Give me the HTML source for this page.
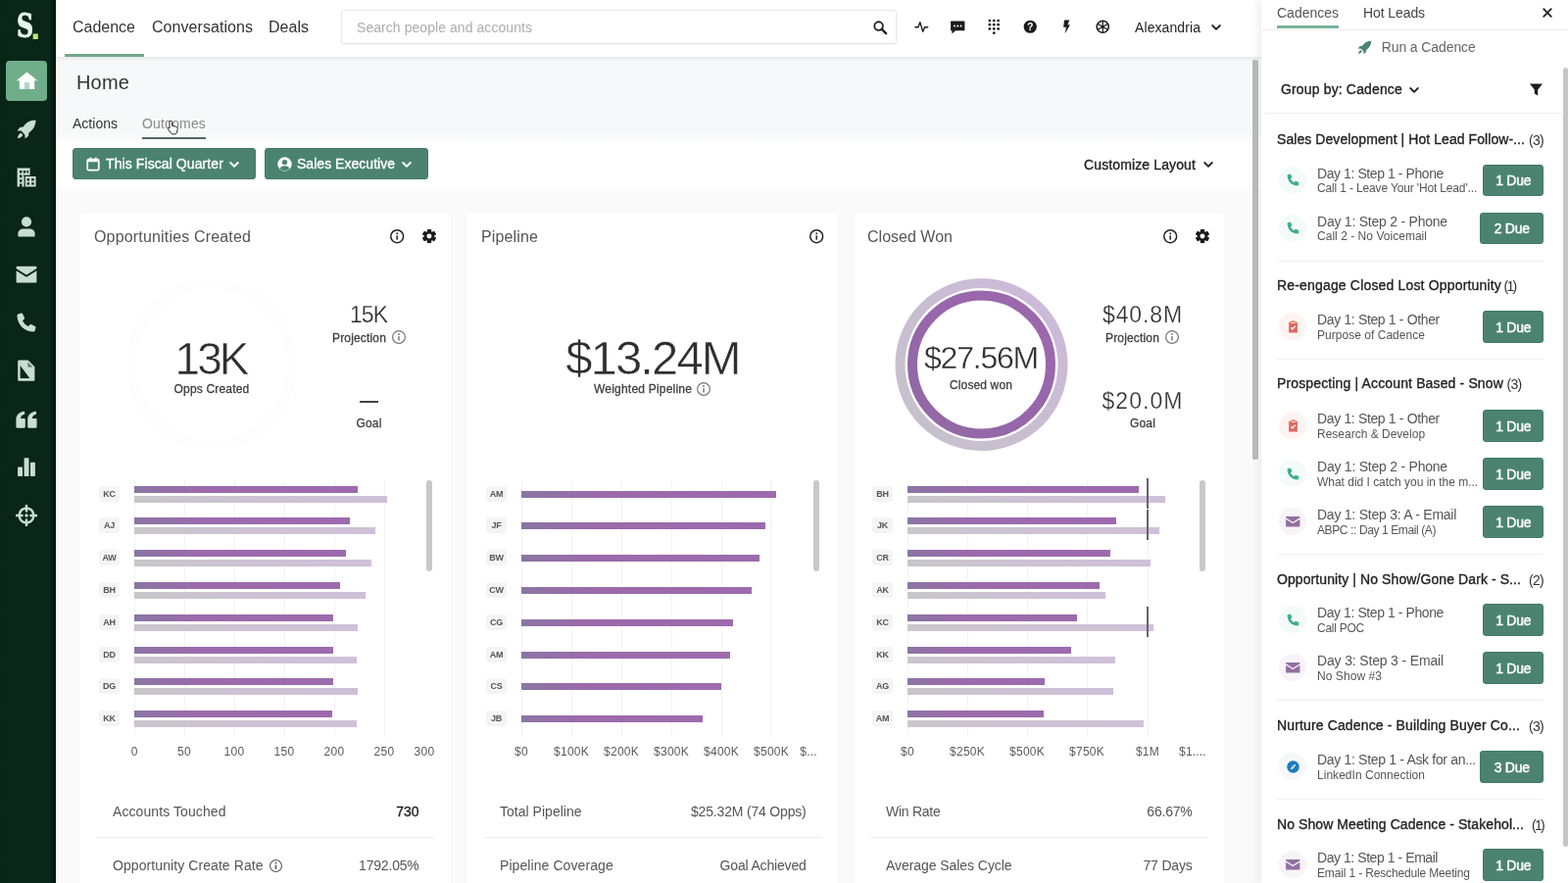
<!DOCTYPE html>
<html lang="en">
<head>
<meta charset="utf-8">
<title>Home - Outcomes</title>
<style>
html,body{margin:0;padding:0;}
body{width:1600px;height:901px;overflow:hidden;position:relative;background:#fafafb;font-family:"Liberation Sans", sans-serif;}
#app{position:absolute;left:0;top:0;width:1600px;height:901px;overflow:hidden;will-change:transform;}
.b{position:absolute;box-sizing:border-box;}
.t{position:absolute;white-space:nowrap;display:block;}
</style>
</head>
<body>
<div id="app">
<div class="b" style="left:57px;top:58px;width:1230px;height:90px;background:linear-gradient(180deg,#f7f8fa 0%,#f7f8fa 86%,#ffffff 100%);"></div>
<div class="b" style="left:57px;top:148px;width:1230px;height:41px;background:#fff;"></div>
<div class="b" style="left:57px;top:189px;width:1230px;height:8px;background:linear-gradient(180deg,#ffffff 0%,#fafafb 100%);"></div>
<div class="b" style="left:57px;top:0px;width:1230px;height:58px;background:#fff;box-shadow:0 1px 4px rgba(0,0,0,.10);"></div>
<div class="b" style="left:0px;top:0px;width:57px;height:901px;background:linear-gradient(90deg,#082518 0%,#0a271a 88%,#03130b 100%);"></div>
<span class="t" style="left:17.2px;top:3.9px;font-size:33px;line-height:46px;color:#e6f6ed;font-weight:700;font-family:'DejaVu Serif','Liberation Serif',serif;-webkit-text-stroke:.9px #e6f6ed;transform:scaleX(.72);transform-origin:0 50%;">S</span>
<span class="t" style="left:31.2px;top:8px;font-size:36px;line-height:40px;color:#c3e37a;font-weight:700;">.</span>
<div class="b" style="left:6px;top:62px;width:42px;height:41px;background:#70ae8b;border-radius:4px;"></div>
<svg class="b" style="left:15.5px;top:71.0px;" width="23" height="23" viewBox="0 0 24 24"><g fill="#fff"><path d="M12 2.6 L0.8 11.8 H4 V20.8 H9.6 V14.2 H14.4 V20.8 H20 V11.8 H23.2 Z"/><rect x="9.6" y="14.2" width="4.8" height="6.6" fill="#b4d8c4"/></g></svg>
<svg class="b" style="left:15.0px;top:120.0px;" width="24" height="24" viewBox="0 0 24 24"><g fill="#c9ddd3"><path d="M21.5 2.5 C16 2.6 11.5 5 8.6 9.6 L5.2 10 L2.6 13.4 L6.6 13.6 L10.4 17.4 L10.6 21.4 L14 18.8 L14.4 15.4 C19 12.5 21.4 8 21.5 2.5 Z"/><path d="M6.6 15.8 C5 16.2 3.4 17.6 2.8 21.2 C6.4 20.6 7.8 19 8.2 17.4 Z"/></g></svg>
<svg class="b" style="left:15.0px;top:169.0px;" width="24" height="24" viewBox="0 0 24 24"><g fill="#c9ddd3"><path fill-rule="evenodd" d="M2.6 2.6 H15.6 V21.4 H2.6 Z M5 5 V7.6 H7.4 V5 Z M8.9 5 V7.6 H11.3 V5 Z M12.6 5 V7.6 H14 V5 Z M5 9.6 V12.2 H7.4 V9.6 Z M5 14.2 V16.8 H7.4 V14.2 Z M5 18.6 V21.4 H7.4 V18.6 Z M8.9 9.6 H10 V10.6 H8.9 Z"/><path d="M9.6 9.8 H22 V22 H9.6 Z" fill="#0b2519"/><path fill-rule="evenodd" d="M10.8 11 H21.6 V21.4 H10.8 Z M12.6 13 V15.4 H15 V13 Z M17.2 13 V15.4 H19.6 V13 Z M12.6 17.2 V19.6 H15 V17.2 Z M17.2 17.2 V19.6 H19.6 V17.2 Z"/></g></svg>
<svg class="b" style="left:15.0px;top:218.5px;" width="24" height="24" viewBox="0 0 24 24"><g fill="#c9ddd3"><circle cx="12" cy="7.4" r="5.1"/><path d="M3.4 21.6 V19.4 C3.4 16.2 6 14.4 9 14.4 H15 C18 14.4 20.6 16.2 20.6 19.4 V21.6 C20.6 22.2 20.2 22.6 19.6 22.6 H4.4 C3.8 22.6 3.4 22.2 3.4 21.6 Z"/></g></svg>
<svg class="b" style="left:15.0px;top:267.5px;" width="24" height="24" viewBox="0 0 24 24"><g fill="#c9ddd3"><path d="M2.6 3.8 H21.4 C22 3.8 22.4 4.2 22.4 4.8 V6 L12 12.6 L1.6 6 V4.8 C1.6 4.2 2 3.8 2.6 3.8 Z"/><path d="M1.6 8.2 L12 14.8 L22.4 8.2 V19.6 C22.4 20.2 22 20.6 21.4 20.6 H2.6 C2 20.6 1.6 20.2 1.6 19.6 Z"/></g></svg>
<svg class="b" style="left:15.0px;top:317.0px;" width="24" height="24" viewBox="0 0 24 24"><g fill="#c9ddd3"><path d="M6.6 2.6 C7.2 2.4 7.8 2.6 8.1 3.2 L10 7.2 C10.2 7.7 10.1 8.3 9.7 8.7 L8 10.2 C9.3 12.8 11.3 14.8 13.9 16.1 L15.4 14.4 C15.8 14 16.4 13.9 16.9 14.1 L20.9 16 C21.5 16.3 21.7 16.9 21.5 17.5 L20.6 20.6 C20.4 21.2 19.9 21.6 19.3 21.6 C10 21.6 2.5 14.1 2.5 4.8 C2.5 4.2 2.9 3.7 3.5 3.5 Z"/></g></svg>
<svg class="b" style="left:15.0px;top:366.0px;" width="24" height="24" viewBox="0 0 24 24"><g fill="#c9ddd3"><path d="M4.6 1.4 H13.6 L20.4 8.2 V21.4 C20.4 22.2 19.8 22.8 19 22.8 H4.6 C3.8 22.8 3.2 22.2 3.2 21.4 V2.8 C3.2 2 3.8 1.4 4.6 1.4 Z"/><path d="M5.6 7 L15.4 20 H5.6 Z" fill="#0b2519"/><path d="M13.4 3.4 L18.4 8.6 H13.4 Z" fill="#0b2519" opacity=".55"/></g></svg>
<svg class="b" style="left:15.0px;top:415.5px;" width="24" height="24" viewBox="0 0 24 24"><g fill="#c9ddd3"><path d="M1.4 19.6 V12.4 C1.4 7.6 4.4 4.4 9.6 3.8 C10 3.8 10.2 4 10.2 4.4 V6.4 C10.2 6.8 10 7 9.6 7.1 C7.4 7.6 6.3 8.9 6.1 11 H9.6 C10.3 11 10.8 11.5 10.8 12.2 V19.6 C10.8 20.3 10.3 20.8 9.6 20.8 H2.6 C1.9 20.8 1.4 20.3 1.4 19.6 Z M13.2 19.6 V12.4 C13.2 7.6 16.2 4.4 21.4 3.8 C21.8 3.8 22 4 22 4.4 V6.4 C22 6.8 21.8 7 21.4 7.1 C19.2 7.6 18.1 8.9 17.9 11 H21.4 C22.1 11 22.6 11.5 22.6 12.2 V19.6 C22.6 20.3 22.1 20.8 21.4 20.8 H14.4 C13.7 20.8 13.2 20.3 13.2 19.6 Z"/></g></svg>
<svg class="b" style="left:15.0px;top:464.0px;" width="24" height="24" viewBox="0 0 24 24"><g fill="#c9ddd3"><rect x="3.1" y="12.6" width="4.9" height="9.4" rx=".7"/><rect x="9.6" y="3.2" width="4.9" height="18.8" rx=".7"/><rect x="16" y="7.8" width="4.9" height="14.2" rx=".7"/></g></svg>
<svg class="b" style="left:15.0px;top:514.0px;" width="24" height="24" viewBox="0 0 24 24"><g fill="#c9ddd3"><path fill-rule="evenodd" d="M10.8 1 H13.2 V3.6 A8.6 8.6 0 0 1 20.4 10.8 H23 V13.2 H20.4 A8.6 8.6 0 0 1 13.2 20.4 V23 H10.8 V20.4 A8.6 8.6 0 0 1 3.6 13.2 H1 V10.8 H3.6 A8.6 8.6 0 0 1 10.8 3.6 Z M10.8 6 A6.2 6.2 0 0 0 6 10.8 H8.6 V13.2 H6 A6.2 6.2 0 0 0 10.8 18 V15.4 H13.2 V18 A6.2 6.2 0 0 0 18 13.2 H15.4 V10.8 H18 A6.2 6.2 0 0 0 13.2 6 V8.6 H10.8 Z"/><circle cx="12" cy="12" r="1.7"/></g></svg>
<span class="t" style="left:74.0px;top:16.5px;font-size:16px;line-height:21px;color:#333;letter-spacing:-0.01px;">Cadence</span>
<span class="t" style="left:155.0px;top:16.5px;font-size:16px;line-height:21px;color:#333;letter-spacing:0.06px;">Conversations</span>
<span class="t" style="left:274.0px;top:16.5px;font-size:16px;line-height:21px;color:#333;letter-spacing:0.02px;">Deals</span>
<div class="b" style="left:65.5px;top:54.6px;width:81px;height:3.4px;background:#74a88e;"></div>
<div class="b" style="left:348px;top:10px;width:567px;height:35px;background:#fff;border:1px solid #e7e7e9;border-radius:3px;box-shadow:0 1px 2px rgba(0,0,0,.05);"></div>
<span class="t" style="left:364.0px;top:19.0px;font-size:14px;line-height:18px;color:#adadad;letter-spacing:0.06px;">Search people and accounts</span>
<svg class="b" style="left:890px;top:20px;" width="16" height="16" viewBox="0 0 17 17"><circle cx="7" cy="7" r="4.6" fill="none" stroke="#222" stroke-width="1.9"/><path d="M10.4 10.4 L15 15" stroke="#222" stroke-width="2.6" stroke-linecap="round"/></svg>
<svg class="b" style="left:931.75px;top:19.25px;" width="16.5" height="16.5" viewBox="0 0 18 18"><path d="M2 9.6 H5.4 L7.4 4 L10.6 14.4 L12.6 9.6 H16" fill="none" stroke="#1c1c1c" stroke-width="1.5" stroke-linejoin="round" stroke-linecap="round"/></svg>
<svg class="b" style="left:968.75px;top:19.25px;" width="16.5" height="16.5" viewBox="0 0 18 18"><path d="M1.2 2.8 H16.8 V13.4 H6.6 L2.6 16.8 V13.4 H1.2 Z" fill="#1c1c1c"/><circle cx="5.4" cy="8.1" r="1.1" fill="#fff"/><circle cx="9" cy="8.1" r="1.1" fill="#fff"/><circle cx="12.6" cy="8.1" r="1.1" fill="#fff"/></svg>
<svg class="b" style="left:1005.75px;top:19.25px;" width="16.5" height="16.5" viewBox="0 0 18 18"><circle cx="4.2" cy="2.2" r="1.5" fill="#1c1c1c"/><circle cx="9" cy="2.2" r="1.5" fill="#1c1c1c"/><circle cx="13.8" cy="2.2" r="1.5" fill="#1c1c1c"/><circle cx="4.2" cy="6.8" r="1.5" fill="#1c1c1c"/><circle cx="9" cy="6.8" r="1.5" fill="#1c1c1c"/><circle cx="13.8" cy="6.8" r="1.5" fill="#1c1c1c"/><circle cx="4.2" cy="11.4" r="1.5" fill="#1c1c1c"/><circle cx="9" cy="11.4" r="1.5" fill="#1c1c1c"/><circle cx="13.8" cy="11.4" r="1.5" fill="#1c1c1c"/><circle cx="9" cy="16" r="1.5" fill="#1c1c1c"/></svg>
<svg class="b" style="left:1042.75px;top:19.25px;" width="16.5" height="16.5" viewBox="0 0 18 18"><circle cx="9" cy="9" r="7.2" fill="#1c1c1c"/><text x="9" y="13.1" font-size="11.5" font-weight="700" text-anchor="middle" fill="#fff" font-family="Liberation Sans, sans-serif">?</text></svg>
<svg class="b" style="left:1079.75px;top:19.25px;" width="16.5" height="16.5" viewBox="0 0 18 18"><path d="M6.6 1.6 H12.4 L10.2 6.8 H13 L7.4 16.6 L8.6 9.6 H5.6 Z" fill="#1c1c1c"/></svg>
<svg class="b" style="left:1116.75px;top:19.25px;" width="16.5" height="16.5" viewBox="0 0 18 18"><circle cx="9" cy="9" r="6.6" fill="none" stroke="#1c1c1c" stroke-width="1.7"/><path d="M9 2.4 V15.6 M3.3 5.7 L14.7 12.3 M3.3 12.3 L14.7 5.7" stroke="#1c1c1c" stroke-width="1.4"/><circle cx="9" cy="9" r="1.6" fill="#1c1c1c"/></svg>
<span class="t" style="left:1158.0px;top:19.0px;font-size:14px;line-height:18px;color:#222;letter-spacing:0.09px;">Alexandria</span>
<svg class="b" style="left:1235px;top:24px;" width="12" height="8" viewBox="0 0 12 8"><path d="M2.2 2 L6 5.8 L9.8 2" fill="none" stroke="#222" stroke-width="1.8" stroke-linecap="round" stroke-linejoin="round"/></svg>
<div class="b" style="left:1278px;top:61px;width:6px;height:408px;background:#bcbcbe;border-radius:2px;"></div>
<span class="t" style="left:78.0px;top:71.0px;font-size:20px;line-height:26px;color:#333;letter-spacing:0.16px;">Home</span>
<span class="t" style="left:74.0px;top:117.0px;font-size:14px;line-height:18px;color:#333;letter-spacing:0.01px;">Actions</span>
<span class="t" style="left:145.0px;top:117.0px;font-size:14px;line-height:18px;color:#8a8a8a;letter-spacing:0.15px;">Outcomes</span>
<div class="b" style="left:145px;top:140px;width:65px;height:2px;background:#4d6b5f;"></div>
<svg class="b" style="left:170px;top:122px;" width="14" height="16" viewBox="0 0 14 16"><path d="M4.2 1.2 C5 1.2 5.6 1.8 5.6 2.6 V6.4 L9.6 7.2 C10.8 7.5 11.4 8.3 11.2 9.5 L10.6 13 C10.4 14.2 9.6 14.8 8.4 14.8 H6.2 C5.4 14.8 4.8 14.4 4.4 13.8 L1.4 9.6 C1 9 1.6 8.2 2.4 8.6 L3 9 V2.6 C3 1.8 3.4 1.2 4.2 1.2 Z" fill="#fff" stroke="#222" stroke-width="1"/></svg>
<div class="b" style="left:74px;top:151px;width:187px;height:32px;background:#4b8370;border-radius:3px;border:1px solid #44796a;"></div>
<svg class="b" style="left:88px;top:160px" width="14" height="15" viewBox="0 0 14 15"><rect x="1.2" y="2.6" width="11.6" height="11" rx="1.4" fill="none" stroke="#fff" stroke-width="1.7"/><rect x="1.2" y="2.6" width="11.6" height="2.6" fill="#fff"/><rect x="3.4" y=".6" width="1.7" height="3" fill="#fff"/><rect x="8.9" y=".6" width="1.7" height="3" fill="#fff"/></svg>
<span class="t" style="left:108.0px;top:158.0px;font-size:14px;line-height:18px;color:#fff;-webkit-text-stroke:0.34px currentColor;letter-spacing:0.09px;">This Fiscal Quarter</span>
<svg class="b" style="left:233px;top:164px;" width="12" height="8" viewBox="0 0 12 8"><path d="M2.2 2 L6 5.8 L9.8 2" fill="none" stroke="#fff" stroke-width="2.0" stroke-linecap="round" stroke-linejoin="round"/></svg>
<div class="b" style="left:270px;top:151px;width:167px;height:32px;background:#4b8370;border-radius:3px;border:1px solid #44796a;"></div>
<svg class="b" style="left:283px;top:160px" width="15" height="15" viewBox="0 0 15 15"><circle cx="7.5" cy="7.5" r="7.2" fill="#fff"/><circle cx="7.5" cy="5.6" r="2.7" fill="#4b8370"/><path d="M2.6 12 C3.4 9.8 5.2 9.2 7.5 9.2 C9.8 9.2 11.6 9.8 12.4 12 C11.2 13.4 9.4 14.2 7.5 14.2 C5.6 14.2 3.8 13.4 2.6 12 Z" fill="#4b8370"/></svg>
<span class="t" style="left:303.0px;top:158.0px;font-size:14px;line-height:18px;color:#fff;-webkit-text-stroke:0.34px currentColor;letter-spacing:0.03px;">Sales Executive</span>
<svg class="b" style="left:409px;top:164px;" width="12" height="8" viewBox="0 0 12 8"><path d="M2.2 2 L6 5.8 L9.8 2" fill="none" stroke="#fff" stroke-width="2.0" stroke-linecap="round" stroke-linejoin="round"/></svg>
<span class="t" style="left:1106.0px;top:158.5px;font-size:14px;line-height:18px;color:#222;-webkit-text-stroke:0.34px currentColor;letter-spacing:0.12px;">Customize Layout</span>
<svg class="b" style="left:1227px;top:164px;" width="12" height="8" viewBox="0 0 12 8"><path d="M2.2 2 L6 5.8 L9.8 2" fill="none" stroke="#222" stroke-width="1.8" stroke-linecap="round" stroke-linejoin="round"/></svg>
<div class="b" style="left:82px;top:217px;width:378px;height:700px;background:#fff;border-radius:4px;box-shadow:0 0 5px rgba(0,0,0,.028);"></div>
<div class="b" style="left:477px;top:217px;width:378px;height:700px;background:#fff;border-radius:4px;box-shadow:0 0 5px rgba(0,0,0,.028);"></div>
<div class="b" style="left:871px;top:217px;width:378px;height:700px;background:#fff;border-radius:4px;box-shadow:0 0 5px rgba(0,0,0,.028);"></div>
<span class="t" style="left:96.0px;top:230.5px;font-size:16px;line-height:21px;color:#555;letter-spacing:0.17px;">Opportunities Created</span>
<svg class="b" style="left:396.8px;top:232.8px;" width="16.4" height="16.4" viewBox="0 0 16.4 16.4"><circle cx="8.2" cy="8.2" r="6.45" fill="none" stroke="#222" stroke-width="1.5"/><rect x="7.449999999999999" y="7.299999999999999" width="1.5" height="4.4" fill="#222"/><circle cx="8.2" cy="5.199999999999999" r=".95" fill="#222"/></svg>
<svg class="b" style="left:430px;top:233px;" width="16" height="16" viewBox="-9 -9 18 18"><rect x="-2.5" y="-8" width="5" height="5" rx="1" transform="rotate(0)" fill="#1c1c1c"/><rect x="-2.5" y="-8" width="5" height="5" rx="1" transform="rotate(60)" fill="#1c1c1c"/><rect x="-2.5" y="-8" width="5" height="5" rx="1" transform="rotate(120)" fill="#1c1c1c"/><rect x="-2.5" y="-8" width="5" height="5" rx="1" transform="rotate(180)" fill="#1c1c1c"/><rect x="-2.5" y="-8" width="5" height="5" rx="1" transform="rotate(240)" fill="#1c1c1c"/><rect x="-2.5" y="-8" width="5" height="5" rx="1" transform="rotate(300)" fill="#1c1c1c"/><circle r="5.7" fill="#1c1c1c"/><circle r="2.8" fill="#fff"/></svg>
<span class="t" style="left:491.0px;top:230.5px;font-size:16px;line-height:21px;color:#555;letter-spacing:0.13px;">Pipeline</span>
<svg class="b" style="left:824.8px;top:232.8px;" width="16.4" height="16.4" viewBox="0 0 16.4 16.4"><circle cx="8.2" cy="8.2" r="6.45" fill="none" stroke="#222" stroke-width="1.5"/><rect x="7.449999999999999" y="7.299999999999999" width="1.5" height="4.4" fill="#222"/><circle cx="8.2" cy="5.199999999999999" r=".95" fill="#222"/></svg>
<span class="t" style="left:885.0px;top:230.5px;font-size:16px;line-height:21px;color:#555;letter-spacing:0.01px;">Closed Won</span>
<svg class="b" style="left:1185.8px;top:232.8px;" width="16.4" height="16.4" viewBox="0 0 16.4 16.4"><circle cx="8.2" cy="8.2" r="6.45" fill="none" stroke="#222" stroke-width="1.5"/><rect x="7.449999999999999" y="7.299999999999999" width="1.5" height="4.4" fill="#222"/><circle cx="8.2" cy="5.199999999999999" r=".95" fill="#222"/></svg>
<svg class="b" style="left:1219px;top:233px;" width="16" height="16" viewBox="-9 -9 18 18"><rect x="-2.5" y="-8" width="5" height="5" rx="1" transform="rotate(0)" fill="#1c1c1c"/><rect x="-2.5" y="-8" width="5" height="5" rx="1" transform="rotate(60)" fill="#1c1c1c"/><rect x="-2.5" y="-8" width="5" height="5" rx="1" transform="rotate(120)" fill="#1c1c1c"/><rect x="-2.5" y="-8" width="5" height="5" rx="1" transform="rotate(180)" fill="#1c1c1c"/><rect x="-2.5" y="-8" width="5" height="5" rx="1" transform="rotate(240)" fill="#1c1c1c"/><rect x="-2.5" y="-8" width="5" height="5" rx="1" transform="rotate(300)" fill="#1c1c1c"/><circle r="5.7" fill="#1c1c1c"/><circle r="2.8" fill="#fff"/></svg>
<svg class="b" style="left:126px;top:282px;" width="180" height="180" viewBox="0 0 180 180"><circle cx="90" cy="90" r="82" fill="none" stroke="#fdfdfd" stroke-width="10"/></svg>
<span class="t" style="left:178.5px;top:336.0px;font-size:46px;line-height:60px;color:#2f2f2f;-webkit-text-stroke:0.51px #fff;letter-spacing:-2.95px;">13K</span>
<span class="t" style="left:177.5px;top:389.0px;font-size:12px;line-height:16px;color:#404040;-webkit-text-stroke:0.29px currentColor;letter-spacing:0.19px;">Opps Created</span>
<span class="t" style="left:357.0px;top:306.0px;font-size:23px;line-height:30px;color:#2f2f2f;-webkit-text-stroke:0.25px #fff;letter-spacing:-0.97px;">15K</span>
<span class="t" style="left:339.0px;top:336.5px;font-size:12px;line-height:16px;color:#404040;-webkit-text-stroke:0.29px currentColor;letter-spacing:0.16px;">Projection</span>
<svg class="b" style="left:398.5px;top:336.0px;" width="16" height="16" viewBox="0 0 16 16"><circle cx="8.0" cy="8.0" r="6.4" fill="none" stroke="#777" stroke-width="1.2"/><rect x="7.25" y="7.1" width="1.5" height="4.4" fill="#777"/><circle cx="8.0" cy="5.0" r=".95" fill="#777"/></svg>
<div class="b" style="left:367px;top:409.3px;width:19px;height:1.6px;background:#444;"></div>
<span class="t" style="left:363.5px;top:424.0px;font-size:12px;line-height:16px;color:#404040;-webkit-text-stroke:0.29px currentColor;letter-spacing:0.16px;">Goal</span>
<span class="t" style="left:577.2px;top:333.3px;font-size:49px;line-height:64px;color:#2f2f2f;-webkit-text-stroke:0.54px #fff;letter-spacing:-1.88px;">$13.24M</span>
<span class="t" style="left:606.0px;top:389.0px;font-size:12px;line-height:16px;color:#404040;-webkit-text-stroke:0.29px currentColor;letter-spacing:0.21px;">Weighted Pipeline</span>
<svg class="b" style="left:710.0px;top:389.0px;" width="16" height="16" viewBox="0 0 16 16"><circle cx="8.0" cy="8.0" r="6.4" fill="none" stroke="#777" stroke-width="1.2"/><rect x="7.25" y="7.1" width="1.5" height="4.4" fill="#777"/><circle cx="8.0" cy="5.0" r=".95" fill="#777"/></svg>
<svg class="b" style="left:911px;top:282px;" width="180" height="180" viewBox="0 0 180 180"><defs><linearGradient id="rgo" x1="0" y1="1" x2="1" y2="0"><stop offset="0" stop-color="#c5c1ca"/><stop offset="1" stop-color="#cdb9da"/></linearGradient><linearGradient id="rgi" x1="0" y1="1" x2="1" y2="0"><stop offset="0" stop-color="#8f6aa2"/><stop offset=".5" stop-color="#9866aa"/><stop offset="1" stop-color="#9c69ad"/></linearGradient></defs><circle cx="90.5" cy="90" r="83" fill="none" stroke="url(#rgo)" stroke-width="10"/><circle cx="90.5" cy="90" r="70.5" fill="none" stroke="url(#rgi)" stroke-width="10"/></svg>
<span class="t" style="left:943.0px;top:343.6px;font-size:32px;line-height:42px;color:#2f2f2f;-webkit-text-stroke:0.35px #fff;letter-spacing:-1.22px;">$27.56M</span>
<span class="t" style="left:969.0px;top:385.0px;font-size:12px;line-height:16px;color:#404040;-webkit-text-stroke:0.29px currentColor;letter-spacing:0.13px;">Closed won</span>
<span class="t" style="left:1125.0px;top:306.0px;font-size:23px;line-height:30px;color:#2f2f2f;-webkit-text-stroke:0.25px #fff;letter-spacing:0.88px;">$40.8M</span>
<span class="t" style="left:1128.0px;top:336.5px;font-size:12px;line-height:16px;color:#404040;-webkit-text-stroke:0.29px currentColor;letter-spacing:0.16px;">Projection</span>
<svg class="b" style="left:1187.5px;top:336.0px;" width="16" height="16" viewBox="0 0 16 16"><circle cx="8.0" cy="8.0" r="6.4" fill="none" stroke="#777" stroke-width="1.2"/><rect x="7.25" y="7.1" width="1.5" height="4.4" fill="#777"/><circle cx="8.0" cy="5.0" r=".95" fill="#777"/></svg>
<span class="t" style="left:1124.5px;top:393.7px;font-size:23px;line-height:30px;color:#2f2f2f;-webkit-text-stroke:0.25px #fff;letter-spacing:1.05px;">$20.0M</span>
<span class="t" style="left:1153.0px;top:424.0px;font-size:12px;line-height:16px;color:#404040;-webkit-text-stroke:0.29px currentColor;letter-spacing:0.16px;">Goal</span>
<div class="b" style="left:137px;top:490px;width:1px;height:262px;background:#f2f2f4;"></div>
<div class="b" style="left:188px;top:490px;width:1px;height:262px;background:#f2f2f4;"></div>
<div class="b" style="left:239px;top:490px;width:1px;height:262px;background:#f2f2f4;"></div>
<div class="b" style="left:290px;top:490px;width:1px;height:262px;background:#f2f2f4;"></div>
<div class="b" style="left:341px;top:490px;width:1px;height:262px;background:#f2f2f4;"></div>
<div class="b" style="left:392px;top:490px;width:1px;height:262px;background:#f2f2f4;"></div>
<div class="b" style="left:101px;top:496px;width:21px;height:16px;background:#f4f4f5;border-radius:3px;"></div>
<span class="t" style="left:105.2px;top:498.0px;font-size:9px;line-height:12px;color:#555;font-weight:700;letter-spacing:-0.19px;">KC</span>
<div class="b" style="left:137px;top:496px;width:227.5px;height:7px;background:linear-gradient(90deg,#8a76a3 0%,#9b6aab 30%,#9d6bad 100%);"></div>
<div class="b" style="left:137px;top:506px;width:257.5px;height:7px;background:linear-gradient(90deg,#c9c6cb 0%,#cdc2d3 50%,#cfc0d8 100%);"></div>
<div class="b" style="left:101px;top:528px;width:21px;height:16px;background:#f4f4f5;border-radius:3px;"></div>
<span class="t" style="left:105.9px;top:530.0px;font-size:9px;line-height:12px;color:#555;font-weight:700;letter-spacing:-0.17px;">AJ</span>
<div class="b" style="left:137px;top:528px;width:219.5px;height:7px;background:linear-gradient(90deg,#8a76a3 0%,#9b6aab 30%,#9d6bad 100%);"></div>
<div class="b" style="left:137px;top:538px;width:246px;height:7px;background:linear-gradient(90deg,#c9c6cb 0%,#cdc2d3 50%,#cfc0d8 100%);"></div>
<div class="b" style="left:101px;top:561px;width:21px;height:16px;background:#f4f4f5;border-radius:3px;"></div>
<span class="t" style="left:104.5px;top:563.0px;font-size:9px;line-height:12px;color:#555;font-weight:700;letter-spacing:-0.22px;">AW</span>
<div class="b" style="left:137px;top:561px;width:216px;height:7px;background:linear-gradient(90deg,#8a76a3 0%,#9b6aab 30%,#9d6bad 100%);"></div>
<div class="b" style="left:137px;top:571px;width:242px;height:7px;background:linear-gradient(90deg,#c9c6cb 0%,#cdc2d3 50%,#cfc0d8 100%);"></div>
<div class="b" style="left:101px;top:594px;width:21px;height:16px;background:#f4f4f5;border-radius:3px;"></div>
<span class="t" style="left:105.2px;top:596.0px;font-size:9px;line-height:12px;color:#555;font-weight:700;letter-spacing:-0.19px;">BH</span>
<div class="b" style="left:137px;top:594px;width:210px;height:7px;background:linear-gradient(90deg,#8a76a3 0%,#9b6aab 30%,#9d6bad 100%);"></div>
<div class="b" style="left:137px;top:604px;width:236px;height:7px;background:linear-gradient(90deg,#c9c6cb 0%,#cdc2d3 50%,#cfc0d8 100%);"></div>
<div class="b" style="left:101px;top:627px;width:21px;height:16px;background:#f4f4f5;border-radius:3px;"></div>
<span class="t" style="left:105.2px;top:629.0px;font-size:9px;line-height:12px;color:#555;font-weight:700;letter-spacing:-0.19px;">AH</span>
<div class="b" style="left:137px;top:627px;width:203px;height:7px;background:linear-gradient(90deg,#8a76a3 0%,#9b6aab 30%,#9d6bad 100%);"></div>
<div class="b" style="left:137px;top:637px;width:227.5px;height:7px;background:linear-gradient(90deg,#c9c6cb 0%,#cdc2d3 50%,#cfc0d8 100%);"></div>
<div class="b" style="left:101px;top:660px;width:21px;height:16px;background:#f4f4f5;border-radius:3px;"></div>
<span class="t" style="left:105.2px;top:662.0px;font-size:9px;line-height:12px;color:#555;font-weight:700;letter-spacing:-0.19px;">DD</span>
<div class="b" style="left:137px;top:660px;width:203px;height:7px;background:linear-gradient(90deg,#8a76a3 0%,#9b6aab 30%,#9d6bad 100%);"></div>
<div class="b" style="left:137px;top:670px;width:227px;height:7px;background:linear-gradient(90deg,#c9c6cb 0%,#cdc2d3 50%,#cfc0d8 100%);"></div>
<div class="b" style="left:101px;top:692px;width:21px;height:16px;background:#f4f4f5;border-radius:3px;"></div>
<span class="t" style="left:105.0px;top:694.0px;font-size:9px;line-height:12px;color:#555;font-weight:700;letter-spacing:-0.20px;">DG</span>
<div class="b" style="left:137px;top:692px;width:203px;height:7px;background:linear-gradient(90deg,#8a76a3 0%,#9b6aab 30%,#9d6bad 100%);"></div>
<div class="b" style="left:137px;top:702px;width:227.5px;height:7px;background:linear-gradient(90deg,#c9c6cb 0%,#cdc2d3 50%,#cfc0d8 100%);"></div>
<div class="b" style="left:101px;top:725px;width:21px;height:16px;background:#f4f4f5;border-radius:3px;"></div>
<span class="t" style="left:105.2px;top:727.0px;font-size:9px;line-height:12px;color:#555;font-weight:700;letter-spacing:-0.19px;">KK</span>
<div class="b" style="left:137px;top:725px;width:202px;height:7px;background:linear-gradient(90deg,#8a76a3 0%,#9b6aab 30%,#9d6bad 100%);"></div>
<div class="b" style="left:137px;top:735px;width:227px;height:7px;background:linear-gradient(90deg,#c9c6cb 0%,#cdc2d3 50%,#cfc0d8 100%);"></div>
<span class="t" style="left:133.7px;top:759.0px;font-size:12px;line-height:16px;color:#5a5a5a;">0</span>
<span class="t" style="left:181.1px;top:759.0px;font-size:12px;line-height:16px;color:#5a5a5a;letter-spacing:0.27px;">50</span>
<span class="t" style="left:228.6px;top:759.0px;font-size:12px;line-height:16px;color:#5a5a5a;letter-spacing:0.27px;">100</span>
<span class="t" style="left:279.6px;top:759.0px;font-size:12px;line-height:16px;color:#5a5a5a;letter-spacing:0.27px;">150</span>
<span class="t" style="left:330.6px;top:759.0px;font-size:12px;line-height:16px;color:#5a5a5a;letter-spacing:0.27px;">200</span>
<span class="t" style="left:381.6px;top:759.0px;font-size:12px;line-height:16px;color:#5a5a5a;letter-spacing:0.27px;">250</span>
<span class="t" style="left:422.6px;top:759.0px;font-size:12px;line-height:16px;color:#5a5a5a;letter-spacing:0.27px;">300</span>
<div class="b" style="left:435px;top:490px;width:6px;height:93px;background:#c9c9cb;border-radius:3px;"></div>
<div class="b" style="left:532px;top:490px;width:1px;height:262px;background:#f2f2f4;"></div>
<div class="b" style="left:583px;top:490px;width:1px;height:262px;background:#f2f2f4;"></div>
<div class="b" style="left:634px;top:490px;width:1px;height:262px;background:#f2f2f4;"></div>
<div class="b" style="left:685px;top:490px;width:1px;height:262px;background:#f2f2f4;"></div>
<div class="b" style="left:736px;top:490px;width:1px;height:262px;background:#f2f2f4;"></div>
<div class="b" style="left:787px;top:490px;width:1px;height:262px;background:#f2f2f4;"></div>
<div class="b" style="left:496px;top:496px;width:21px;height:16px;background:#f4f4f5;border-radius:3px;"></div>
<span class="t" style="left:499.7px;top:498.0px;font-size:9px;line-height:12px;color:#555;font-weight:700;letter-spacing:-0.21px;">AM</span>
<div class="b" style="left:532px;top:501px;width:260px;height:7px;background:linear-gradient(90deg,#8a76a3 0%,#9b6aab 30%,#9d6bad 100%);"></div>
<div class="b" style="left:496px;top:528px;width:21px;height:16px;background:#f4f4f5;border-radius:3px;"></div>
<span class="t" style="left:501.4px;top:530.0px;font-size:9px;line-height:12px;color:#555;font-weight:700;letter-spacing:-0.16px;">JF</span>
<div class="b" style="left:532px;top:533px;width:248.5px;height:7px;background:linear-gradient(90deg,#8a76a3 0%,#9b6aab 30%,#9d6bad 100%);"></div>
<div class="b" style="left:496px;top:561px;width:21px;height:16px;background:#f4f4f5;border-radius:3px;"></div>
<span class="t" style="left:499.2px;top:563.0px;font-size:9px;line-height:12px;color:#555;font-weight:700;letter-spacing:-0.22px;">BW</span>
<div class="b" style="left:532px;top:566px;width:243px;height:7px;background:linear-gradient(90deg,#8a76a3 0%,#9b6aab 30%,#9d6bad 100%);"></div>
<div class="b" style="left:496px;top:594px;width:21px;height:16px;background:#f4f4f5;border-radius:3px;"></div>
<span class="t" style="left:499.2px;top:596.0px;font-size:9px;line-height:12px;color:#555;font-weight:700;letter-spacing:-0.22px;">CW</span>
<div class="b" style="left:532px;top:599px;width:235px;height:7px;background:linear-gradient(90deg,#8a76a3 0%,#9b6aab 30%,#9d6bad 100%);"></div>
<div class="b" style="left:496px;top:627px;width:21px;height:16px;background:#f4f4f5;border-radius:3px;"></div>
<span class="t" style="left:500.0px;top:629.0px;font-size:9px;line-height:12px;color:#555;font-weight:700;letter-spacing:-0.20px;">CG</span>
<div class="b" style="left:532px;top:632px;width:215.5px;height:7px;background:linear-gradient(90deg,#8a76a3 0%,#9b6aab 30%,#9d6bad 100%);"></div>
<div class="b" style="left:496px;top:660px;width:21px;height:16px;background:#f4f4f5;border-radius:3px;"></div>
<span class="t" style="left:499.7px;top:662.0px;font-size:9px;line-height:12px;color:#555;font-weight:700;letter-spacing:-0.21px;">AM</span>
<div class="b" style="left:532px;top:665px;width:212.5px;height:7px;background:linear-gradient(90deg,#8a76a3 0%,#9b6aab 30%,#9d6bad 100%);"></div>
<div class="b" style="left:496px;top:692px;width:21px;height:16px;background:#f4f4f5;border-radius:3px;"></div>
<span class="t" style="left:500.4px;top:694.0px;font-size:9px;line-height:12px;color:#555;font-weight:700;letter-spacing:-0.19px;">CS</span>
<div class="b" style="left:532px;top:697px;width:204px;height:7px;background:linear-gradient(90deg,#8a76a3 0%,#9b6aab 30%,#9d6bad 100%);"></div>
<div class="b" style="left:496px;top:725px;width:21px;height:16px;background:#f4f4f5;border-radius:3px;"></div>
<span class="t" style="left:500.9px;top:727.0px;font-size:9px;line-height:12px;color:#555;font-weight:700;letter-spacing:-0.17px;">JB</span>
<div class="b" style="left:532px;top:730px;width:185px;height:7px;background:linear-gradient(90deg,#8a76a3 0%,#9b6aab 30%,#9d6bad 100%);"></div>
<span class="t" style="left:525.1px;top:759.0px;font-size:12px;line-height:16px;color:#5a5a5a;letter-spacing:0.27px;">$0</span>
<span class="t" style="left:565.0px;top:759.0px;font-size:12px;line-height:16px;color:#5a5a5a;letter-spacing:0.28px;">$100K</span>
<span class="t" style="left:616.0px;top:759.0px;font-size:12px;line-height:16px;color:#5a5a5a;letter-spacing:0.28px;">$200K</span>
<span class="t" style="left:667.0px;top:759.0px;font-size:12px;line-height:16px;color:#5a5a5a;letter-spacing:0.28px;">$300K</span>
<span class="t" style="left:718.0px;top:759.0px;font-size:12px;line-height:16px;color:#5a5a5a;letter-spacing:0.28px;">$400K</span>
<span class="t" style="left:769.0px;top:759.0px;font-size:12px;line-height:16px;color:#5a5a5a;letter-spacing:0.28px;">$500K</span>
<span class="t" style="left:816.3px;top:759.0px;font-size:12px;line-height:16px;color:#5a5a5a;letter-spacing:0.17px;">$...</span>
<div class="b" style="left:830px;top:490px;width:6px;height:93px;background:#c9c9cb;border-radius:3px;"></div>
<div class="b" style="left:926px;top:490px;width:1px;height:262px;background:#f2f2f4;"></div>
<div class="b" style="left:987px;top:490px;width:1px;height:262px;background:#f2f2f4;"></div>
<div class="b" style="left:1048px;top:490px;width:1px;height:262px;background:#f2f2f4;"></div>
<div class="b" style="left:1109px;top:490px;width:1px;height:262px;background:#f2f2f4;"></div>
<div class="b" style="left:1171px;top:490px;width:1px;height:262px;background:#f2f2f4;"></div>
<div class="b" style="left:890px;top:496px;width:21px;height:16px;background:#f4f4f5;border-radius:3px;"></div>
<span class="t" style="left:894.2px;top:498.0px;font-size:9px;line-height:12px;color:#555;font-weight:700;letter-spacing:-0.19px;">BH</span>
<div class="b" style="left:926px;top:496px;width:236px;height:7px;background:linear-gradient(90deg,#8a76a3 0%,#9b6aab 30%,#9d6bad 100%);"></div>
<div class="b" style="left:926px;top:506px;width:262.5px;height:7px;background:linear-gradient(90deg,#c9c6cb 0%,#cdc2d3 50%,#cfc0d8 100%);"></div>
<div class="b" style="left:890px;top:528px;width:21px;height:16px;background:#f4f4f5;border-radius:3px;"></div>
<span class="t" style="left:894.9px;top:530.0px;font-size:9px;line-height:12px;color:#555;font-weight:700;letter-spacing:-0.17px;">JK</span>
<div class="b" style="left:926px;top:528px;width:212.5px;height:7px;background:linear-gradient(90deg,#8a76a3 0%,#9b6aab 30%,#9d6bad 100%);"></div>
<div class="b" style="left:926px;top:538px;width:257px;height:7px;background:linear-gradient(90deg,#c9c6cb 0%,#cdc2d3 50%,#cfc0d8 100%);"></div>
<div class="b" style="left:890px;top:561px;width:21px;height:16px;background:#f4f4f5;border-radius:3px;"></div>
<span class="t" style="left:894.2px;top:563.0px;font-size:9px;line-height:12px;color:#555;font-weight:700;letter-spacing:-0.19px;">CR</span>
<div class="b" style="left:926px;top:561px;width:207px;height:7px;background:linear-gradient(90deg,#8a76a3 0%,#9b6aab 30%,#9d6bad 100%);"></div>
<div class="b" style="left:926px;top:571px;width:248px;height:7px;background:linear-gradient(90deg,#c9c6cb 0%,#cdc2d3 50%,#cfc0d8 100%);"></div>
<div class="b" style="left:890px;top:594px;width:21px;height:16px;background:#f4f4f5;border-radius:3px;"></div>
<span class="t" style="left:894.2px;top:596.0px;font-size:9px;line-height:12px;color:#555;font-weight:700;letter-spacing:-0.19px;">AK</span>
<div class="b" style="left:926px;top:594px;width:196px;height:7px;background:linear-gradient(90deg,#8a76a3 0%,#9b6aab 30%,#9d6bad 100%);"></div>
<div class="b" style="left:926px;top:604px;width:202px;height:7px;background:linear-gradient(90deg,#c9c6cb 0%,#cdc2d3 50%,#cfc0d8 100%);"></div>
<div class="b" style="left:890px;top:627px;width:21px;height:16px;background:#f4f4f5;border-radius:3px;"></div>
<span class="t" style="left:894.2px;top:629.0px;font-size:9px;line-height:12px;color:#555;font-weight:700;letter-spacing:-0.19px;">KC</span>
<div class="b" style="left:926px;top:627px;width:173px;height:7px;background:linear-gradient(90deg,#8a76a3 0%,#9b6aab 30%,#9d6bad 100%);"></div>
<div class="b" style="left:926px;top:637px;width:250.5px;height:7px;background:linear-gradient(90deg,#c9c6cb 0%,#cdc2d3 50%,#cfc0d8 100%);"></div>
<div class="b" style="left:890px;top:660px;width:21px;height:16px;background:#f4f4f5;border-radius:3px;"></div>
<span class="t" style="left:894.2px;top:662.0px;font-size:9px;line-height:12px;color:#555;font-weight:700;letter-spacing:-0.19px;">KK</span>
<div class="b" style="left:926px;top:660px;width:166.5px;height:7px;background:linear-gradient(90deg,#8a76a3 0%,#9b6aab 30%,#9d6bad 100%);"></div>
<div class="b" style="left:926px;top:670px;width:211.5px;height:7px;background:linear-gradient(90deg,#c9c6cb 0%,#cdc2d3 50%,#cfc0d8 100%);"></div>
<div class="b" style="left:890px;top:692px;width:21px;height:16px;background:#f4f4f5;border-radius:3px;"></div>
<span class="t" style="left:894.0px;top:694.0px;font-size:9px;line-height:12px;color:#555;font-weight:700;letter-spacing:-0.20px;">AG</span>
<div class="b" style="left:926px;top:692px;width:140px;height:7px;background:linear-gradient(90deg,#8a76a3 0%,#9b6aab 30%,#9d6bad 100%);"></div>
<div class="b" style="left:926px;top:702px;width:209.5px;height:7px;background:linear-gradient(90deg,#c9c6cb 0%,#cdc2d3 50%,#cfc0d8 100%);"></div>
<div class="b" style="left:890px;top:725px;width:21px;height:16px;background:#f4f4f5;border-radius:3px;"></div>
<span class="t" style="left:893.7px;top:727.0px;font-size:9px;line-height:12px;color:#555;font-weight:700;letter-spacing:-0.21px;">AM</span>
<div class="b" style="left:926px;top:725px;width:139px;height:7px;background:linear-gradient(90deg,#8a76a3 0%,#9b6aab 30%,#9d6bad 100%);"></div>
<div class="b" style="left:926px;top:735px;width:241px;height:7px;background:linear-gradient(90deg,#c9c6cb 0%,#cdc2d3 50%,#cfc0d8 100%);"></div>
<div class="b" style="left:1170.3px;top:488px;width:1.5px;height:31px;background:#67626e;"></div>
<div class="b" style="left:1170.3px;top:520px;width:1.5px;height:31px;background:#67626e;"></div>
<div class="b" style="left:1170.3px;top:619px;width:1.5px;height:31px;background:#67626e;"></div>
<span class="t" style="left:919.1px;top:759.0px;font-size:12px;line-height:16px;color:#5a5a5a;letter-spacing:0.27px;">$0</span>
<span class="t" style="left:969.0px;top:759.0px;font-size:12px;line-height:16px;color:#5a5a5a;letter-spacing:0.28px;">$250K</span>
<span class="t" style="left:1030.0px;top:759.0px;font-size:12px;line-height:16px;color:#5a5a5a;letter-spacing:0.28px;">$500K</span>
<span class="t" style="left:1091.0px;top:759.0px;font-size:12px;line-height:16px;color:#5a5a5a;letter-spacing:0.28px;">$750K</span>
<span class="t" style="left:1158.9px;top:759.0px;font-size:12px;line-height:16px;color:#5a5a5a;letter-spacing:0.31px;">$1M</span>
<span class="t" style="left:1203.1px;top:759.0px;font-size:12px;line-height:16px;color:#5a5a5a;letter-spacing:0.18px;">$1....</span>
<div class="b" style="left:1224px;top:490px;width:6px;height:93px;background:#c9c9cb;border-radius:3px;"></div>
<span class="t" style="left:115.0px;top:819.0px;font-size:14px;line-height:18px;color:#555;letter-spacing:0.09px;">Accounts Touched</span>
<span class="t" style="left:404.2px;top:819.0px;font-size:14px;line-height:18px;color:#222;-webkit-text-stroke:0.34px currentColor;">730</span>
<div class="b" style="left:99px;top:854px;width:344px;height:1px;background:#ededef;"></div>
<span class="t" style="left:115.0px;top:874.0px;font-size:14px;line-height:18px;color:#555;letter-spacing:0.08px;">Opportunity Create Rate</span>
<svg class="b" style="left:274.054555px;top:875.5px;" width="15.0" height="15.0" viewBox="0 0 15.0 15.0"><circle cx="7.5" cy="7.5" r="5.95" fill="none" stroke="#555" stroke-width="1.1"/><rect x="6.75" y="6.6" width="1.5" height="4.4" fill="#555"/><circle cx="7.5" cy="4.5" r=".95" fill="#555"/></svg>
<span class="t" style="left:366.1px;top:874.0px;font-size:14px;line-height:18px;color:#555;letter-spacing:-0.20px;">1792.05%</span>
<span class="t" style="left:510.0px;top:819.0px;font-size:14px;line-height:18px;color:#555;letter-spacing:0.02px;">Total Pipeline</span>
<span class="t" style="left:705.0px;top:819.0px;font-size:14px;line-height:18px;color:#555;letter-spacing:-0.18px;">$25.32M (74 Opps)</span>
<div class="b" style="left:494px;top:854px;width:344px;height:1px;background:#ededef;"></div>
<span class="t" style="left:510.0px;top:874.0px;font-size:14px;line-height:18px;color:#555;letter-spacing:0.08px;">Pipeline Coverage</span>
<span class="t" style="left:734.6px;top:874.0px;font-size:14px;line-height:18px;color:#555;letter-spacing:-0.17px;">Goal Achieved</span>
<span class="t" style="left:904.0px;top:819.0px;font-size:14px;line-height:18px;color:#555;letter-spacing:-0.26px;">Win Rate</span>
<span class="t" style="left:1170.3px;top:819.0px;font-size:14px;line-height:18px;color:#555;letter-spacing:-0.20px;">66.67%</span>
<div class="b" style="left:888px;top:854px;width:344px;height:1px;background:#ededef;"></div>
<span class="t" style="left:904.0px;top:874.0px;font-size:14px;line-height:18px;color:#555;letter-spacing:-0.06px;">Average Sales Cycle</span>
<span class="t" style="left:1166.5px;top:874.0px;font-size:14px;line-height:18px;color:#555;letter-spacing:-0.18px;">77 Days</span>
<div class="b" style="left:1287px;top:0px;width:313px;height:901px;background:#fff;box-shadow:-3px 0 10px rgba(0,0,0,.07);"></div>
<span class="t" style="left:1303.0px;top:4.0px;font-size:14px;line-height:18px;color:#555;">Cadences</span>
<span class="t" style="left:1391.0px;top:4.0px;font-size:14px;line-height:18px;color:#444;letter-spacing:-0.09px;">Hot Leads</span>
<div class="b" style="left:1303px;top:26.4px;width:63px;height:3px;background:#79b196;"></div>
<div class="b" style="left:1287px;top:29.6px;width:313px;height:1px;background:#ececee;"></div>
<svg class="b" style="left:1573.4px;top:7px;" width="12" height="12" viewBox="0 0 12 12"><path d="M2.2 2.2 L9.8 9.8 M9.8 2.2 L2.2 9.8" stroke="#222" stroke-width="1.8" stroke-linecap="round"/></svg>
<svg class="b" style="left:1384px;top:40px;" width="17" height="17" viewBox="0 0 24 24"><g fill="#4b8370"><path d="M21.5 2.5 C16 2.6 11.5 5 8.6 9.6 L5.2 10 L2.6 13.4 L6.6 13.6 L10.4 17.4 L10.6 21.4 L14 18.8 L14.4 15.4 C19 12.5 21.4 8 21.5 2.5 Z"/><path d="M6.6 15.8 C5 16.2 3.4 17.6 2.8 21.2 C6.4 20.6 7.8 19 8.2 17.4 Z"/></g></svg>
<span class="t" style="left:1409.7px;top:39.3px;font-size:14px;line-height:18px;color:#666;letter-spacing:-0.10px;">Run a Cadence</span>
<span class="t" style="left:1307.0px;top:82.0px;font-size:14px;line-height:18px;color:#222;-webkit-text-stroke:0.34px currentColor;letter-spacing:0.15px;">Group by: Cadence</span>
<svg class="b" style="left:1437px;top:88px;" width="12" height="8" viewBox="0 0 12 8"><path d="M2.2 2 L6 5.8 L9.8 2" fill="none" stroke="#222" stroke-width="1.8" stroke-linecap="round" stroke-linejoin="round"/></svg>
<svg class="b" style="left:1560px;top:84px;" width="15" height="15" viewBox="0 0 15 15"><path d="M1 1.6 H14 L9.2 7.4 V13.6 L5.8 11.6 V7.4 Z" fill="#1c1c1c"/></svg>
<div class="b" style="left:1290px;top:115px;width:304px;height:1px;background:#f1f1f3;box-shadow:0 1px 3px rgba(0,0,0,.05);"></div>
<div class="b" style="left:1594.6px;top:69px;width:5.4px;height:795px;background:#c6c6c8;border-radius:3px;"></div>
<span class="t" style="left:1303.0px;top:133.0px;font-size:14px;line-height:18px;color:#222;-webkit-text-stroke:0.34px currentColor;letter-spacing:0.07px;">Sales Development | Hot Lead Follow-...</span>
<span class="t" style="left:1560.0px;top:133.5px;font-size:14px;line-height:18px;color:#333;letter-spacing:-0.70px;">(3)</span>
<div class="b" style="left:1305px;top:169.5px;width:28px;height:28px;background:#f3fbf8;border-radius:50%;"></div>
<svg class="b" style="left:1311.5px;top:176.0px;" width="15" height="15" viewBox="0 0 24 24"><g fill="#3fae8e"><path d="M6.6 2.6 C7.2 2.4 7.8 2.6 8.1 3.2 L10 7.2 C10.2 7.7 10.1 8.3 9.7 8.7 L8 10.2 C9.3 12.8 11.3 14.8 13.9 16.1 L15.4 14.4 C15.8 14 16.4 13.9 16.9 14.1 L20.9 16 C21.5 16.3 21.7 16.9 21.5 17.5 L20.6 20.6 C20.4 21.2 19.9 21.6 19.3 21.6 C10 21.6 2.5 14.1 2.5 4.8 C2.5 4.2 2.9 3.7 3.5 3.5 Z"/></g></svg>
<span class="t" style="left:1344.0px;top:167.5px;font-size:14px;line-height:18px;color:#555;letter-spacing:-0.42px;">Day 1: Step 1 - Phone</span>
<span class="t" style="left:1344.0px;top:184.0px;font-size:12px;line-height:16px;color:#555;letter-spacing:-0.15px;">Call 1 - Leave Your &#x27;Hot Lead&#x27;...</span>
<div class="b" style="left:1513.2px;top:167.9px;width:62.09999999999991px;height:32.4px;background:#4b8370;border-radius:3px;border:1px solid #44796a;"></div>
<span class="t" style="left:1526.2px;top:175.1px;font-size:14px;line-height:18px;color:#fff;-webkit-text-stroke:0.34px currentColor;letter-spacing:-0.27px;-webkit-text-stroke:.45px #fff;">1 Due</span>
<div class="b" style="left:1305px;top:218.5px;width:28px;height:28px;background:#f3fbf8;border-radius:50%;"></div>
<svg class="b" style="left:1311.5px;top:225.0px;" width="15" height="15" viewBox="0 0 24 24"><g fill="#3fae8e"><path d="M6.6 2.6 C7.2 2.4 7.8 2.6 8.1 3.2 L10 7.2 C10.2 7.7 10.1 8.3 9.7 8.7 L8 10.2 C9.3 12.8 11.3 14.8 13.9 16.1 L15.4 14.4 C15.8 14 16.4 13.9 16.9 14.1 L20.9 16 C21.5 16.3 21.7 16.9 21.5 17.5 L20.6 20.6 C20.4 21.2 19.9 21.6 19.3 21.6 C10 21.6 2.5 14.1 2.5 4.8 C2.5 4.2 2.9 3.7 3.5 3.5 Z"/></g></svg>
<span class="t" style="left:1344.0px;top:216.5px;font-size:14px;line-height:18px;color:#555;letter-spacing:-0.23px;">Day 1: Step 2 - Phone</span>
<span class="t" style="left:1344.0px;top:233.0px;font-size:12px;line-height:16px;color:#555;letter-spacing:0.03px;">Call 2 - No Voicemail</span>
<div class="b" style="left:1510px;top:216.9px;width:65.29999999999995px;height:32.4px;background:#4b8370;border-radius:3px;border:1px solid #44796a;"></div>
<span class="t" style="left:1524.7px;top:224.1px;font-size:14px;line-height:18px;color:#fff;-webkit-text-stroke:0.34px currentColor;letter-spacing:-0.27px;-webkit-text-stroke:.45px #fff;">2 Due</span>
<div class="b" style="left:1303px;top:266px;width:272px;height:1px;background:#efeff1;"></div>
<span class="t" style="left:1303.0px;top:282.0px;font-size:14px;line-height:18px;color:#222;-webkit-text-stroke:0.34px currentColor;letter-spacing:0.17px;">Re-engage Closed Lost Opportunity</span>
<span class="t" style="left:1534.5px;top:282.5px;font-size:14px;line-height:18px;color:#333;letter-spacing:-1.70px;">(1)</span>
<div class="b" style="left:1305px;top:319px;width:28px;height:28px;background:#fdf4f2;border-radius:50%;"></div>
<svg class="b" style="left:1311.5px;top:325.5px;" width="15" height="15" viewBox="0 0 24 24"><g fill="#e0685f"><path d="M5 4.4 H19 V21.6 H5 Z"/><rect x="8.4" y="2.4" width="7.2" height="4" rx="1"/></g><path d="M8.6 13.2 L11 15.6 L15.6 10.6" fill="none" stroke="#fff" stroke-width="2"/><rect x="8.6" y="4.6" width="6.8" height="1.6" fill="#fdf4f2"/></svg>
<span class="t" style="left:1344.0px;top:317.0px;font-size:14px;line-height:18px;color:#555;letter-spacing:-0.35px;">Day 1: Step 1 - Other</span>
<span class="t" style="left:1344.0px;top:333.5px;font-size:12px;line-height:16px;color:#555;letter-spacing:0.03px;">Purpose of Cadence</span>
<div class="b" style="left:1513.2px;top:317.4px;width:62.09999999999991px;height:32.4px;background:#4b8370;border-radius:3px;border:1px solid #44796a;"></div>
<span class="t" style="left:1526.2px;top:324.6px;font-size:14px;line-height:18px;color:#fff;-webkit-text-stroke:0.34px currentColor;letter-spacing:-0.27px;-webkit-text-stroke:.45px #fff;">1 Due</span>
<div class="b" style="left:1303px;top:366px;width:272px;height:1px;background:#efeff1;"></div>
<span class="t" style="left:1303.0px;top:382.0px;font-size:14px;line-height:18px;color:#222;-webkit-text-stroke:0.34px currentColor;letter-spacing:0.14px;">Prospecting | Account Based - Snow</span>
<span class="t" style="left:1537.5px;top:382.5px;font-size:14px;line-height:18px;color:#333;letter-spacing:-0.70px;">(3)</span>
<div class="b" style="left:1305px;top:420px;width:28px;height:28px;background:#fdf4f2;border-radius:50%;"></div>
<svg class="b" style="left:1311.5px;top:426.5px;" width="15" height="15" viewBox="0 0 24 24"><g fill="#e0685f"><path d="M5 4.4 H19 V21.6 H5 Z"/><rect x="8.4" y="2.4" width="7.2" height="4" rx="1"/></g><path d="M8.6 13.2 L11 15.6 L15.6 10.6" fill="none" stroke="#fff" stroke-width="2"/><rect x="8.6" y="4.6" width="6.8" height="1.6" fill="#fdf4f2"/></svg>
<span class="t" style="left:1344.0px;top:418.0px;font-size:14px;line-height:18px;color:#555;letter-spacing:-0.35px;">Day 1: Step 1 - Other</span>
<span class="t" style="left:1344.0px;top:434.5px;font-size:12px;line-height:16px;color:#555;">Research &amp; Develop</span>
<div class="b" style="left:1513.2px;top:418.4px;width:62.09999999999991px;height:32.4px;background:#4b8370;border-radius:3px;border:1px solid #44796a;"></div>
<span class="t" style="left:1526.2px;top:425.6px;font-size:14px;line-height:18px;color:#fff;-webkit-text-stroke:0.34px currentColor;letter-spacing:-0.27px;-webkit-text-stroke:.45px #fff;">1 Due</span>
<div class="b" style="left:1305px;top:469px;width:28px;height:28px;background:#f3fbf8;border-radius:50%;"></div>
<svg class="b" style="left:1311.5px;top:475.5px;" width="15" height="15" viewBox="0 0 24 24"><g fill="#3fae8e"><path d="M6.6 2.6 C7.2 2.4 7.8 2.6 8.1 3.2 L10 7.2 C10.2 7.7 10.1 8.3 9.7 8.7 L8 10.2 C9.3 12.8 11.3 14.8 13.9 16.1 L15.4 14.4 C15.8 14 16.4 13.9 16.9 14.1 L20.9 16 C21.5 16.3 21.7 16.9 21.5 17.5 L20.6 20.6 C20.4 21.2 19.9 21.6 19.3 21.6 C10 21.6 2.5 14.1 2.5 4.8 C2.5 4.2 2.9 3.7 3.5 3.5 Z"/></g></svg>
<span class="t" style="left:1344.0px;top:467.0px;font-size:14px;line-height:18px;color:#555;letter-spacing:-0.23px;">Day 1: Step 2 - Phone</span>
<span class="t" style="left:1344.0px;top:483.5px;font-size:12px;line-height:16px;color:#555;letter-spacing:-0.02px;">What did I catch you in the m...</span>
<div class="b" style="left:1513.2px;top:467.4px;width:62.09999999999991px;height:32.4px;background:#4b8370;border-radius:3px;border:1px solid #44796a;"></div>
<span class="t" style="left:1526.2px;top:474.6px;font-size:14px;line-height:18px;color:#fff;-webkit-text-stroke:0.34px currentColor;letter-spacing:-0.27px;-webkit-text-stroke:.45px #fff;">1 Due</span>
<div class="b" style="left:1305px;top:518px;width:28px;height:28px;background:#f8f3f9;border-radius:50%;"></div>
<svg class="b" style="left:1310.75px;top:524.25px;" width="16.5" height="16.5" viewBox="0 0 24 24"><g fill="#93709f"><path d="M1.6 4.4 H22.4 V6 L12 12.6 L1.6 6 Z"/><path d="M1.6 8.2 L12 14.8 L22.4 8.2 V19.8 H1.6 Z"/></g></svg>
<span class="t" style="left:1344.0px;top:516.0px;font-size:14px;line-height:18px;color:#555;letter-spacing:-0.24px;">Day 1: Step 3: A - Email</span>
<span class="t" style="left:1344.0px;top:532.5px;font-size:12px;line-height:16px;color:#555;letter-spacing:-0.39px;">ABPC :: Day 1 Email (A)</span>
<div class="b" style="left:1513.2px;top:516.4px;width:62.09999999999991px;height:32.4px;background:#4b8370;border-radius:3px;border:1px solid #44796a;"></div>
<span class="t" style="left:1526.2px;top:523.6px;font-size:14px;line-height:18px;color:#fff;-webkit-text-stroke:0.34px currentColor;letter-spacing:-0.27px;-webkit-text-stroke:.45px #fff;">1 Due</span>
<div class="b" style="left:1303px;top:565px;width:272px;height:1px;background:#efeff1;"></div>
<span class="t" style="left:1303.0px;top:582.0px;font-size:14px;line-height:18px;color:#222;-webkit-text-stroke:0.34px currentColor;letter-spacing:0.09px;">Opportunity | No Show/Gone Dark - S...</span>
<span class="t" style="left:1560.0px;top:582.5px;font-size:14px;line-height:18px;color:#333;letter-spacing:-0.70px;">(2)</span>
<div class="b" style="left:1305px;top:618px;width:28px;height:28px;background:#f3fbf8;border-radius:50%;"></div>
<svg class="b" style="left:1311.5px;top:624.5px;" width="15" height="15" viewBox="0 0 24 24"><g fill="#3fae8e"><path d="M6.6 2.6 C7.2 2.4 7.8 2.6 8.1 3.2 L10 7.2 C10.2 7.7 10.1 8.3 9.7 8.7 L8 10.2 C9.3 12.8 11.3 14.8 13.9 16.1 L15.4 14.4 C15.8 14 16.4 13.9 16.9 14.1 L20.9 16 C21.5 16.3 21.7 16.9 21.5 17.5 L20.6 20.6 C20.4 21.2 19.9 21.6 19.3 21.6 C10 21.6 2.5 14.1 2.5 4.8 C2.5 4.2 2.9 3.7 3.5 3.5 Z"/></g></svg>
<span class="t" style="left:1344.0px;top:616.0px;font-size:14px;line-height:18px;color:#555;letter-spacing:-0.42px;">Day 1: Step 1 - Phone</span>
<span class="t" style="left:1344.0px;top:632.5px;font-size:12px;line-height:16px;color:#555;letter-spacing:-0.25px;">Call POC</span>
<div class="b" style="left:1513.2px;top:616.4px;width:62.09999999999991px;height:32.4px;background:#4b8370;border-radius:3px;border:1px solid #44796a;"></div>
<span class="t" style="left:1526.2px;top:623.6px;font-size:14px;line-height:18px;color:#fff;-webkit-text-stroke:0.34px currentColor;letter-spacing:-0.27px;-webkit-text-stroke:.45px #fff;">1 Due</span>
<div class="b" style="left:1305px;top:667px;width:28px;height:28px;background:#f8f3f9;border-radius:50%;"></div>
<svg class="b" style="left:1310.75px;top:673.25px;" width="16.5" height="16.5" viewBox="0 0 24 24"><g fill="#93709f"><path d="M1.6 4.4 H22.4 V6 L12 12.6 L1.6 6 Z"/><path d="M1.6 8.2 L12 14.8 L22.4 8.2 V19.8 H1.6 Z"/></g></svg>
<span class="t" style="left:1344.0px;top:665.0px;font-size:14px;line-height:18px;color:#555;letter-spacing:-0.16px;">Day 3: Step 3 - Email</span>
<span class="t" style="left:1344.0px;top:681.5px;font-size:12px;line-height:16px;color:#555;letter-spacing:0.06px;">No Show #3</span>
<div class="b" style="left:1513.2px;top:665.4px;width:62.09999999999991px;height:32.4px;background:#4b8370;border-radius:3px;border:1px solid #44796a;"></div>
<span class="t" style="left:1526.2px;top:672.6px;font-size:14px;line-height:18px;color:#fff;-webkit-text-stroke:0.34px currentColor;letter-spacing:-0.27px;-webkit-text-stroke:.45px #fff;">1 Due</span>
<div class="b" style="left:1303px;top:714px;width:272px;height:1px;background:#efeff1;"></div>
<span class="t" style="left:1303.0px;top:731.0px;font-size:14px;line-height:18px;color:#222;-webkit-text-stroke:0.34px currentColor;letter-spacing:0.14px;">Nurture Cadence - Building Buyer Co...</span>
<span class="t" style="left:1560.0px;top:731.5px;font-size:14px;line-height:18px;color:#333;letter-spacing:-0.70px;">(3)</span>
<div class="b" style="left:1305px;top:768px;width:28px;height:28px;background:#f5f7fa;border-radius:50%;"></div>
<svg class="b" style="left:1311.5px;top:774.5px;" width="15" height="15" viewBox="0 0 24 24"><circle cx="12" cy="12" r="10" fill="#1b7bbf"/><path d="M16.6 7.4 L13.6 13.6 L7.4 16.6 L10.4 10.4 Z" fill="#fff"/><circle cx="12" cy="12" r="1.3" fill="#1b7bbf"/></svg>
<span class="t" style="left:1344.0px;top:766.0px;font-size:14px;line-height:18px;color:#555;letter-spacing:-0.32px;">Day 1: Step 1 - Ask for an...</span>
<span class="t" style="left:1344.0px;top:782.5px;font-size:12px;line-height:16px;color:#555;letter-spacing:0.03px;">LinkedIn Connection</span>
<div class="b" style="left:1510px;top:766.4px;width:65.29999999999995px;height:32.4px;background:#4b8370;border-radius:3px;border:1px solid #44796a;"></div>
<span class="t" style="left:1524.7px;top:773.6px;font-size:14px;line-height:18px;color:#fff;-webkit-text-stroke:0.34px currentColor;letter-spacing:-0.27px;-webkit-text-stroke:.45px #fff;">3 Due</span>
<div class="b" style="left:1303px;top:815px;width:272px;height:1px;background:#efeff1;"></div>
<span class="t" style="left:1303.0px;top:832.0px;font-size:14px;line-height:18px;color:#222;-webkit-text-stroke:0.34px currentColor;letter-spacing:0.08px;">No Show Meeting Cadence - Stakehol...</span>
<span class="t" style="left:1563.0px;top:832.5px;font-size:14px;line-height:18px;color:#333;letter-spacing:-1.70px;">(1)</span>
<div class="b" style="left:1305px;top:868px;width:28px;height:28px;background:#f8f3f9;border-radius:50%;"></div>
<svg class="b" style="left:1310.75px;top:874.25px;" width="16.5" height="16.5" viewBox="0 0 24 24"><g fill="#93709f"><path d="M1.6 4.4 H22.4 V6 L12 12.6 L1.6 6 Z"/><path d="M1.6 8.2 L12 14.8 L22.4 8.2 V19.8 H1.6 Z"/></g></svg>
<span class="t" style="left:1344.0px;top:866.0px;font-size:14px;line-height:18px;color:#555;letter-spacing:-0.44px;">Day 1: Step 1 - Email</span>
<span class="t" style="left:1344.0px;top:882.5px;font-size:12px;line-height:16px;color:#555;letter-spacing:-0.15px;">Email 1 - Reschedule Meeting</span>
<div class="b" style="left:1513.2px;top:866.4px;width:62.09999999999991px;height:32.4px;background:#4b8370;border-radius:3px;border:1px solid #44796a;"></div>
<span class="t" style="left:1526.2px;top:873.6px;font-size:14px;line-height:18px;color:#fff;-webkit-text-stroke:0.34px currentColor;letter-spacing:-0.27px;-webkit-text-stroke:.45px #fff;">1 Due</span>
</div>
</body>
</html>
